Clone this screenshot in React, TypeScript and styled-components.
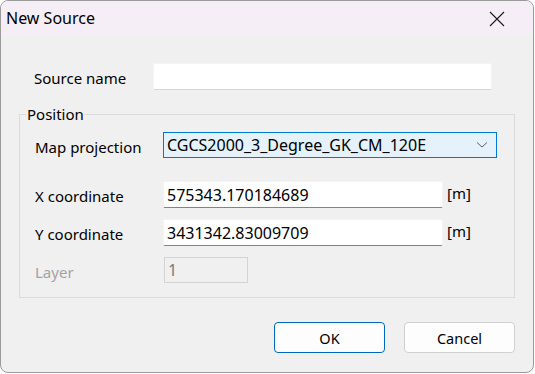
import React from "react";
import styled, { createGlobalStyle } from "styled-components";

const Global = createGlobalStyle`
  html, body {
    margin: 0;
    padding: 0;
    background: #ffffff;
  }
  body {
    font-family: "Noto Sans", "Liberation Sans", sans-serif;
  }
`;

const Window = styled.div`
  box-sizing: border-box;
  width: 534px;
  height: 373px;
  border: 1px solid #9a9a9a;
  border-radius: 8px;
  overflow: hidden;
  background: #f0f0f0;
  display: flex;
  flex-direction: column;
`;

const TitleBar = styled.div`
  height: 35px;
  flex: none;
  background: #f5eef6;
  display: flex;
  align-items: center;
  justify-content: space-between;
  padding: 0 28px 0 5px;
`;

const Title = styled.span`
  font-size: 16px;
  color: #000;
  padding-bottom: 1px;
`;

const Body = styled.div`
  flex: 1;
  display: flex;
  flex-direction: column;
  padding: 27px 18px 0 18px;
`;

const Row = styled.div<{ $top?: number; $labelWidth?: number }>`
  display: flex;
  align-items: center;
  margin-top: ${({ $top }) => $top ?? 0}px;
  padding-left: 15px;
  & > label {
    width: ${({ $labelWidth }) => $labelWidth ?? 120}px;
  }
`;

const Label = styled.label<{ $disabled?: boolean }>`
  flex: none;
  font-size: 15px;
  color: ${({ $disabled }) => ($disabled ? "#a3a3a3" : "#000")};
  padding-top: 3px;
`;

const TextBox = styled.div<{ $width: number; $strong?: boolean }>`
  box-sizing: border-box;
  width: ${({ $width }) => $width}px;
  height: 27px;
  background: #fff;
  border: 1px solid #f4f4f4;
  border-bottom-color: ${({ $strong }) => ($strong ? "#848484" : "#d6d6d6")};
  border-radius: 2px;
  font-size: 16px;
  color: #000;
  padding: 0 3px;
  display: flex;
  align-items: center;
`;

const Disabled = styled.div`
  box-sizing: border-box;
  width: 84px;
  height: 26px;
  border: 1px solid #d4d4d4;
  background: #f0f0f0;
  font-size: 16px;
  color: #7a7a7a;
  padding: 0 3px;
  display: flex;
  align-items: center;
`;

const Unit = styled.span`
  font-size: 15px;
  color: #000;
  margin-left: 4px;
  margin-top: -3px;
`;

const Combo = styled.div`
  box-sizing: border-box;
  width: 334px;
  height: 26px;
  background: #e5f1fb;
  border: 1px solid #0078d7;
  display: flex;
  align-items: center;
  justify-content: space-between;
  padding: 0 8px 0 3px;
  font-size: 16px;
  color: #000;
`;

const Group = styled.fieldset`
  margin: 15px 0 0 0;
  padding: 9px 0 14px 0;
  border: 1px solid #dcdcdc;
  min-width: 0;
`;

const Legend = styled.legend`
  font-size: 15px;
  line-height: 18px;
  color: #000;
  padding: 0 1px;
  margin-left: 6px;
`;

const Buttons = styled.div`
  display: flex;
  justify-content: flex-end;
  gap: 19px;
  margin-top: 24px;
`;

const Button = styled.button<{ $primary?: boolean }>`
  box-sizing: border-box;
  width: 111px;
  height: 31px;
  background: #fdfdfd;
  border: 1px solid ${({ $primary }) => ($primary ? "#0067c0" : "#d0d0d0")};
  border-radius: 4px;
  font-family: "Noto Sans", "Liberation Sans", sans-serif;
  font-size: 14.5px;
  color: #000;
  padding: 0;
`;

const CloseIcon = () => (
  <svg width="16" height="16" viewBox="0 0 16 16">
    <path d="M1 1 L15 15 M15 1 L1 15" stroke="#1a1a1a" strokeWidth="1.1" fill="none" />
  </svg>
);

const Chevron = () => (
  <svg width="12" height="8" viewBox="0 0 12 8">
    <path d="M1 1.5 L6 6 L11 1.5" stroke="#606060" strokeWidth="1" fill="none" />
  </svg>
);

export default function App() {
  return (
    <>
      <Global />
      <Window>
        <TitleBar>
          <Title>New Source</Title>
          <CloseIcon />
        </TitleBar>
        <Body>
          <Row $labelWidth={119}>
            <Label>Source name</Label>
            <TextBox $width={339} />
          </Row>
          <Group>
            <Legend>Position</Legend>
            <Row $labelWidth={128}>
              <Label>Map projection</Label>
              <Combo>
                <span>CGCS2000_3_Degree_GK_CM_120E</span>
                <Chevron />
              </Combo>
            </Row>
            <Row $top={23} $labelWidth={128}>
              <Label>X coordinate</Label>
              <TextBox $width={280} $strong>575343.170184689</TextBox>
              <Unit>[m]</Unit>
            </Row>
            <Row $top={11} $labelWidth={128}>
              <Label>Y coordinate</Label>
              <TextBox $width={280} $strong>3431342.83009709</TextBox>
              <Unit>[m]</Unit>
            </Row>
            <Row $top={11} $labelWidth={129}>
              <Label $disabled>Layer</Label>
              <Disabled>1</Disabled>
            </Row>
          </Group>
          <Buttons>
            <Button $primary>OK</Button>
            <Button>Cancel</Button>
          </Buttons>
        </Body>
      </Window>
    </>
  );
}
